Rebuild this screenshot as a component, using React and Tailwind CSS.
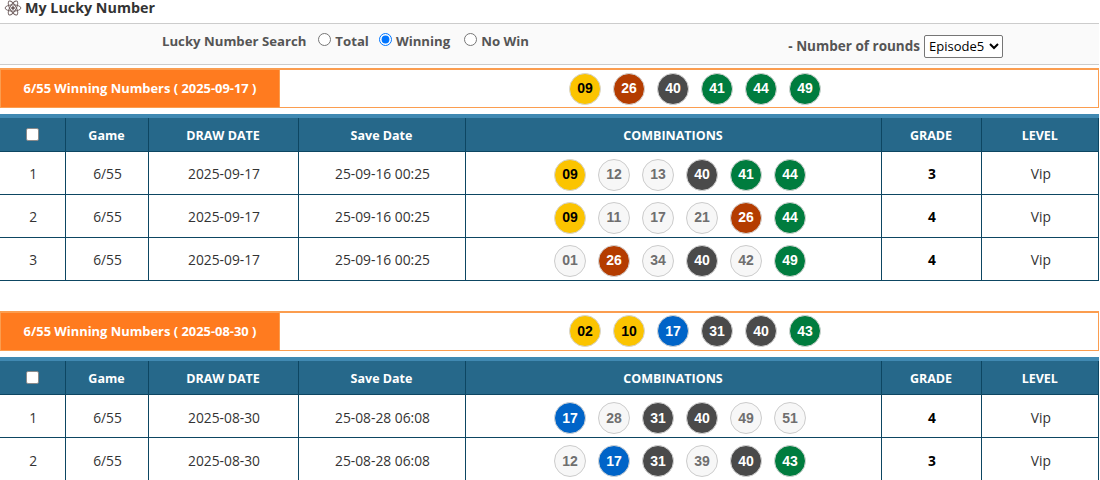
import React from 'react'

const yellow = [2, 9, 10]
const blue = [17]
const red = [26]
const dark = [31, 40]
const green = [41, 43, 44, 49]

const ballColor = (n, hit) => {
    if (!hit) return 'bg-[#f7f7f7] text-[#6f6f6f] border-[#cccccc]'
    if (yellow.includes(n)) return 'bg-[#fbc400] text-black border-[#d5d5d5]'
    if (blue.includes(n)) return 'bg-[#0064c8] text-white border-[#d5d5d5]'
    if (red.includes(n)) return 'bg-[#b43c00] text-white border-[#d5d5d5]'
    if (dark.includes(n)) return 'bg-[#4a4a4a] text-white border-[#d5d5d5]'
    if (green.includes(n)) return 'bg-[#007c3e] text-white border-[#d5d5d5]'
    return 'bg-[#f7f7f7] text-[#6f6f6f] border-[#cccccc]'
}

const Ball = ({ n, hit }) => (
    <span className={`flex items-center justify-center w-8 h-8 rounded-full border text-[14px] font-bold font-['Liberation_Sans',sans-serif] ${ballColor(n, hit)}`}>
        {String(n).padStart(2, '0')}
    </span>
)

const Balls = ({ nums, winning }) => (
    <div className="flex items-center justify-center gap-3 pl-3">
        {nums.map((n, i) => <Ball key={i} n={n} hit={winning.includes(n)} />)}
    </div>
)

const Th = ({ children, className = 'pt-[5px]' }) => (
    <th className={`border-x border-b border-[#0d4662] text-[12.5px] font-bold text-white ${className}`}>{children}</th>
)

const Td = ({ children, className = '' }) => (
    <td className={`border border-[#0d4662] pt-1 pl-[2px] text-center text-[13.8px] text-[#333333] ${className}`}>{children}</td>
)

const Draw = ({ date, winning, rows, headHeight = 'h-[35px]' }) => (
    <section>
        <div className="flex h-[40px] border border-t-2 border-[#fb9d4f] mt-[3px]">
            <div className="flex items-center justify-center w-[279px] pt-px bg-[#ff7b1f] border-r border-[#fb9d4f] text-[12.9px] font-bold text-white">
                6/55 Winning Numbers ( {date} )
            </div>
            <div className="flex-1 flex items-center justify-center">
                <Balls nums={winning} winning={winning} />
            </div>
        </div>
        <table className="w-full table-fixed border-collapse mt-[6px]">
            <colgroup>
                <col className="w-[65px]" />
                <col className="w-[83px]" />
                <col className="w-[150px]" />
                <col className="w-[167px]" />
                <col className="w-[416px]" />
                <col className="w-[100px]" />
                <col />
            </colgroup>
            <thead>
                <tr className={`${headHeight} bg-[#26688a] border-t-[4px] border-[#4089b2]`}>
                    <Th className="border-l-0">
                        <input type="checkbox" className="w-[13px] h-[13px] appearance-none bg-white border border-[#8a8a8a] rounded-[2px] block mx-auto" />
                    </Th>
                    <Th>Game</Th>
                    <Th>DRAW DATE</Th>
                    <Th>Save Date</Th>
                    <Th>COMBINATIONS</Th>
                    <Th>GRADE</Th>
                    <Th>LEVEL</Th>
                </tr>
            </thead>
            <tbody>
                {rows.map((r, i) => (
                    <tr key={i} className="h-[43px]">
                        <Td className="border-l-0">{i + 1}</Td>
                        <Td>6/55</Td>
                        <Td>{date}</Td>
                        <Td>{r.saved}</Td>
                        <Td><Balls nums={r.nums} winning={winning} /></Td>
                        <Td className="font-bold text-black">{r.grade}</Td>
                        <Td>Vip</Td>
                    </tr>
                ))}
            </tbody>
        </table>
    </section>
)

const App = () => {
    return (
        <main className="w-[1099px] h-[480px] overflow-hidden bg-white font-['Open_Sans',sans-serif]">
            <h1 className="flex items-center gap-[3px] h-[23px] pb-[8px] pl-[4px] text-[14.3px] leading-[15px] font-bold text-[#333333]">
                <svg viewBox="0 0 24 24" width="18" height="18" fill="none" stroke="#6b5a5a" strokeWidth="1.2">
                    <circle cx="12" cy="12" r="1.8" fill="#6b5a5a" />
                    <ellipse cx="12" cy="12" rx="10.5" ry="4.2" />
                    <ellipse cx="12" cy="12" rx="10.5" ry="4.2" transform="rotate(60 12 12)" />
                    <ellipse cx="12" cy="12" rx="10.5" ry="4.2" transform="rotate(120 12 12)" />
                </svg>
                My Lucky Number
            </h1>
            <div className="flex h-[42px] border-y border-[#cccccc] bg-[#fafafa] text-[13.2px] font-bold text-[#555555]">
                <div className="flex items-start pl-[162px] pt-[8px]">
                    <span className="mr-[12px]">Lucky Number Search</span>
                    <label className="flex items-center gap-[4px] mr-[10px]"><input type="radio" name="f" className="m-0 w-[13px] h-[13px] -mt-[4px]" />Total</label>
                    <label className="flex items-center gap-[4px] mr-[14px]"><input type="radio" name="f" defaultChecked className="m-0 w-[13px] h-[13px] -mt-[4px]" />Winning</label>
                    <label className="flex items-center gap-[4px]"><input type="radio" name="f" className="m-0 w-[13px] h-[13px] -mt-[4px]" />No Win</label>
                </div>
                <div className="ml-auto flex items-center gap-[4px] pr-[96px] pt-[4px]">
                    <span className="text-[13.5px]">- Number of rounds</span>
                    <select className="h-[23px] w-[79px] border border-[#767676] rounded-[2px] bg-white text-[13px] font-normal text-black">
                        <option>Episode5</option>
                    </select>
                </div>
            </div>
            <Draw
                date="2025-09-17"
                winning={[9, 26, 40, 41, 44, 49]}
                rows={[
                    { saved: '25-09-16 00:25', nums: [9, 12, 13, 40, 41, 44], grade: 3 },
                    { saved: '25-09-16 00:25', nums: [9, 11, 17, 21, 26, 44], grade: 4 },
                    { saved: '25-09-16 00:25', nums: [1, 26, 34, 40, 42, 49], grade: 4 },
                ]}
            />
            <div className="h-[27px]" />
            <Draw
                date="2025-08-30"
                winning={[2, 10, 17, 31, 40, 43]}
                headHeight="h-[36px]"
                rows={[
                    { saved: '25-08-28 06:08', nums: [17, 28, 31, 40, 49, 51], grade: 4 },
                    { saved: '25-08-28 06:08', nums: [12, 17, 31, 39, 40, 43], grade: 3 },
                ]}
            />
        </main>
    )
}

export default App
